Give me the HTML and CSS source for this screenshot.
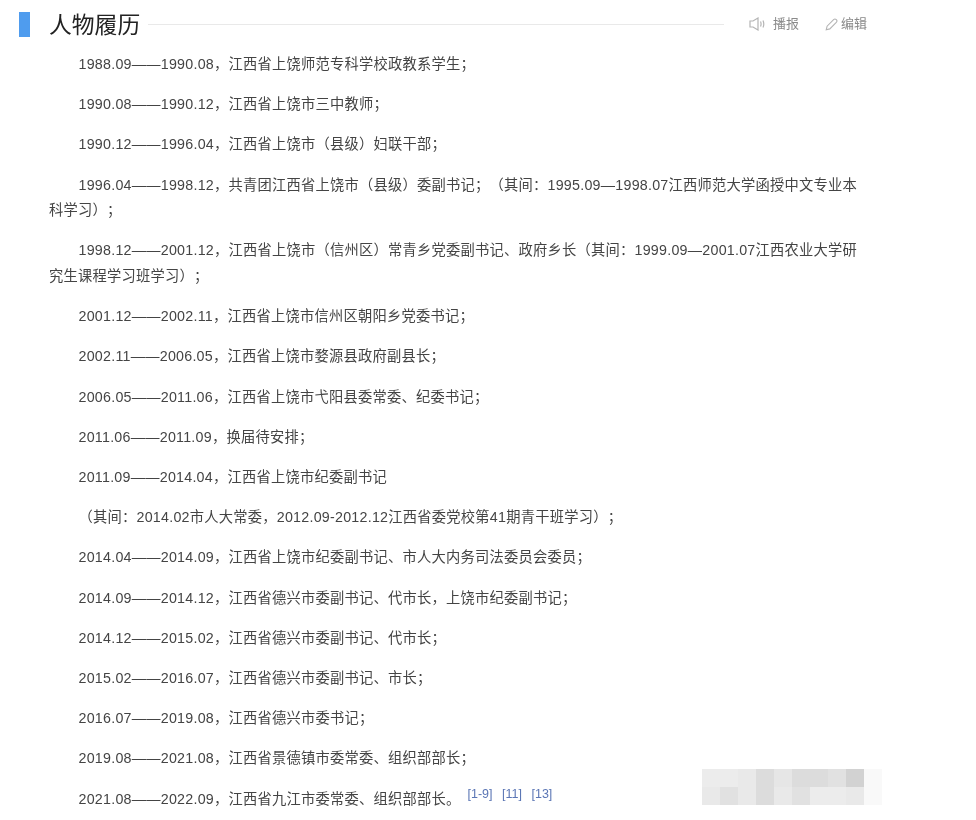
FILE: index.html
```html
<!DOCTYPE html>
<html lang="zh-CN">
<head>
<meta charset="utf-8">
<title>人物履历</title>
<link rel="stylesheet" href="styles.css">
</head>
<body>
<main class="page">
  <header class="head">
    <span class="mark"></span>
    <h2 class="title">人物履历</h2>
    <span class="rule"></span>
    <a class="tool tool-audio">
      <svg class="ico" width="16" height="14" viewBox="0 0 16 14" fill="none" stroke="#b4b4b4" stroke-width="1.2"><path d="M1 4h3l5-3v12L4 10H1z"/><path d="M11.500 4.500c.7 1.500.7 3.500 0 5M14 3.500c1 2.200 1 4.800 0 7"/></svg>
      <span>播报</span>
    </a>
    <a class="tool tool-edit">
      <svg class="ico" width="13" height="13" viewBox="0 0 13 13" fill="none" stroke="#b4b4b4" stroke-width="1.100"><path d="M1.200 11.800l.9-3.600L8.600 1.700a1.700 1.700 0 0 1 2.700 2.700L4.800 10.900z"/></svg>
      <span>编辑</span>
    </a>
  </header>
  <section class="body">
    <p>1988.09——1990.08，江西省上饶师范专科学校政教系学生；</p>
    <p>1990.08——1990.12，江西省上饶市三中教师；</p>
    <p>1990.12——1996.04，江西省上饶市（县级）妇联干部；</p>
    <p>1996.04——1998.12，共青团江西省上饶市（县级）委副书记；（其间：1995.09—1998.07江西师范大学函授中文专业本科学习）；</p>
    <p>1998.12——2001.12，江西省上饶市（信州区）常青乡党委副书记、政府乡长（其间：1999.09—2001.07江西农业大学研究生课程学习班学习）；</p>
    <p>2001.12——2002.11，江西省上饶市信州区朝阳乡党委书记；</p>
    <p>2002.11——2006.05，江西省上饶市婺源县政府副县长；</p>
    <p>2006.05——2011.06，江西省上饶市弋阳县委常委、纪委书记；</p>
    <p>2011.06——2011.09，换届待安排；</p>
    <p>2011.09——2014.04，江西省上饶市纪委副书记</p>
    <p>（其间：2014.02市人大常委，2012.09-2012.12江西省委党校第41期青干班学习）；</p>
    <p>2014.04——2014.09，江西省上饶市纪委副书记、市人大内务司法委员会委员；</p>
    <p>2014.09——2014.12，江西省德兴市委副书记、代市长，上饶市纪委副书记；</p>
    <p>2014.12——2015.02，江西省德兴市委副书记、代市长；</p>
    <p>2015.02——2016.07，江西省德兴市委副书记、市长；</p>
    <p>2016.07——2019.08，江西省德兴市委书记；</p>
    <p>2019.08——2021.08，江西省景德镇市委常委、组织部部长；</p>
    <p>2021.08——2022.09，江西省九江市委常委、组织部部长。<sup class="refs"><a>[1-9]</a><a>[11]</a><a>[13]</a></sup></p>
  </section>
  <div class="mosaic" aria-hidden="true">
    <i class="g1"></i><i class="g1"></i><i class="g2"></i><i class="g5"></i><i class="g3"></i><i class="g5"></i><i class="g5"></i><i class="g4"></i><i class="g6"></i><i class="g7"></i>
    <i class="g2"></i><i class="g4"></i><i class="g2"></i><i class="g5"></i><i class="g2"></i><i class="g4"></i><i class="g1"></i><i class="g1"></i><i class="g2"></i><i class="g7"></i>
  </div>
</main>
</body>
</html>
```
FILE: styles.css
```css
html, body {
  margin: 0;
  padding: 0;
  background: #fff;
  height: 820px;
  overflow: hidden;
}
body {
  font-family: "Liberation Sans", "Noto Sans CJK SC", sans-serif;
  color: #444;
  text-spacing-trim: space-all;
}
.page {
  position: relative;
  width: 976px;
  height: 820px;
  padding: 11px 0 0 19px;
  box-sizing: border-box;
  filter: blur(0.4px);
}
.head {
  display: flex;
  align-items: center;
  width: 848px;
  height: 26px;
}
.mark {
  width: 11px;
  height: 25px;
  background: #4f9cee;
  margin-right: 19px;
}
.title {
  margin: 2px 8px 0 0;
  font-size: 22.800px;
  font-weight: 400;
  line-height: 26px;
  color: #222;
}
.rule {
  flex: 1;
  height: 1px;
  background: #e9e9e9;
  margin-right: 25px;
}
.tool {
  display: flex;
  align-items: center;
  font-size: 13px;
  line-height: 24px;
  color: #8a8a8a;
}
.tool-audio .ico { margin-right: 8px; }
.tool-edit { margin-left: 26px; }
.tool-edit .ico { margin-right: 3px; }
.body {
  width: 810px;
  margin: 15px 0 0 30px;
  font-size: 14.250px;
  letter-spacing: 0.250px;
  line-height: 25.600px;
}
.body p {
  margin: 0 0 14.620px;
  text-indent: 29.500px;
}
.refs {
  display: inline-flex;
  gap: 9.500px;
  margin-left: 7px;
  font-size: 12.500px;
  letter-spacing: 0;
  line-height: 0;
  text-indent: 0;
  vertical-align: 6px;
  color: #5b76b5;
}
.mosaic {
  position: absolute;
  left: 702px;
  top: 769px;
  display: grid;
  grid-template-columns: repeat(10, 18px);
  grid-auto-rows: 18px;
}
.g1 { background: #ececec; }
.g2 { background: #e9e9e9; }
.g3 { background: #e6e6e6; }
.g4 { background: #e1e1e1; }
.g5 { background: #dcdcdc; }
.g6 { background: #d2d2d2; }
.g7 { background: #f9f9f9; }
```
